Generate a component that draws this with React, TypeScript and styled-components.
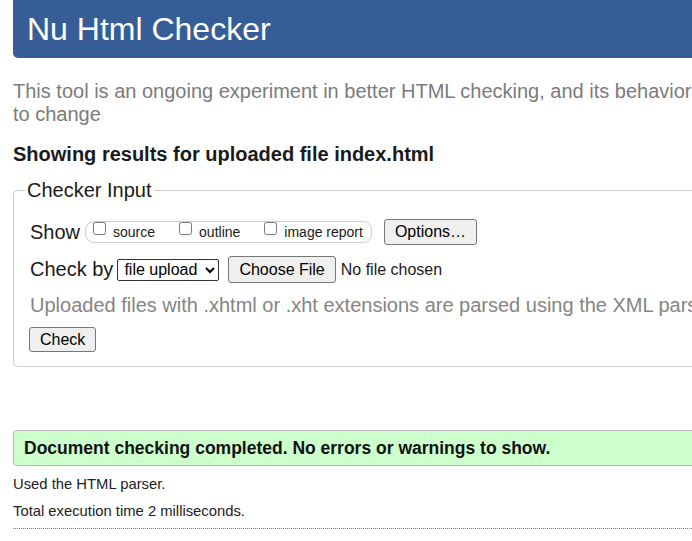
import React from "react";
import styled, { createGlobalStyle } from "styled-components";

const GlobalStyle = createGlobalStyle`
  html, body {
    margin: 0;
    padding: 0;
    background: #fff;
    overflow: hidden;
  }

  body {
    font-family: "Liberation Sans", Arial, sans-serif;
    color: #000;
  }
`;

const Page = styled.div`
  box-sizing: border-box;
  width: 1000px;
  padding-left: 13px;
`;

const Header = styled.header`
  display: flex;
  align-items: center;
  height: 58px;
  padding-left: 14px;
  background-color: #365d95;
  border-radius: 0 0 5px 5px;

  > h1 {
    margin: 0;
    font-size: 32px;
    font-weight: normal;
    line-height: 37px;
    color: #fff;
  }
`;

const Intro = styled.p`
  margin: 22px 0 0;
  font-size: 20px;
  line-height: 23px;
  color: #7b7b7b;
`;

const ResultsTitle = styled.h2`
  margin: 17px 0 0;
  font-size: 20px;
  font-weight: bold;
  line-height: 23px;
  color: #1a1a1a;
`;

const Fieldset = styled.fieldset`
  margin: 13px 0 0;
  padding: 17px 16px 14px;
  border: 1px solid #ccc;
  border-radius: 4px;

  > legend {
    margin-left: -5px;
    padding: 0 2px;
    font-size: 20px;
    line-height: 23px;
    color: #1a1a1a;
  }
`;

const FormBody = styled.div`
  display: flex;
  flex-direction: column;
  gap: 11px;
`;

const Row = styled.div<{ $h: number }>`
  display: flex;
  align-items: center;
  height: ${(p) => p.$h}px;
`;

const RowLabel = styled.span`
  margin-right: 5px;
  font-size: 20px;
  line-height: 23px;
  color: #1a1a1a;
`;

const OptionGroup = styled.div`
  display: flex;
  align-items: center;
  gap: 24px;
  height: 20px;
  padding: 0 8px 0 7px;
  border: 1px solid #ccc;
  border-radius: 9px;
`;

const Option = styled.label`
  display: flex;
  align-items: center;
  font-size: 14px;
  line-height: 16px;
  color: #1a1a1a;

  > input {
    width: 13px;
    height: 13px;
    margin: 0 7px 7px 0;
  }
`;

const Button = styled.button<{ $h: number; $ml?: number }>`
  box-sizing: border-box;
  display: inline-flex;
  align-items: center;
  justify-content: center;
  height: ${(p) => p.$h}px;
  margin-left: ${(p) => p.$ml ?? 0}px;
  padding: 0 10px;
  font-family: "Liberation Sans", Arial, sans-serif;
  font-size: 16px;
  color: #000;
  background-color: #efefef;
  border: 1px solid #767676;
  border-radius: 3px;
`;

const Select = styled.select`
  box-sizing: border-box;
  width: 102px;
  height: 22px;
  margin-left: -1px;
  padding: 0 0 0 2px;
  font-family: "Liberation Sans", Arial, sans-serif;
  font-size: 16px;
  color: #000;
  background-color: #fff;
  border: 1px solid #333;
  border-radius: 2px;
`;

const FileStatus = styled.span`
  margin-left: 5px;
  font-size: 16px;
  color: #1a1a1a;
`;

const Note = styled.div`
  font-size: 20px;
  line-height: 22px;
  color: #858585;
`;

const Success = styled.div`
  margin-top: 63px;
  padding: 8px 10px;
  font-size: 17.5px;
  font-weight: bold;
  line-height: 18px;
  color: #111;
  background-color: #ccffcc;
  border: 1px solid #bbb;
  border-radius: 4px;
`;

const Detail = styled.p`
  margin: 10px 0 0;
  font-size: 14.8px;
  line-height: 17px;
  color: #222;
`;

const Rule = styled.hr`
  margin: 8px 0 0;
  border: 0;
  border-top: 1px dotted #777;
`;

const App = () => {
  return (
    <Page>
      <GlobalStyle />
      <Header>
        <h1>Nu Html Checker</h1>
      </Header>
      <Intro>
        This tool is an ongoing experiment in better HTML checking, and its behavior remains subject
        <br />
        to change
      </Intro>
      <ResultsTitle>Showing results for uploaded file index.html</ResultsTitle>
      <Fieldset>
        <legend>Checker Input</legend>
        <FormBody>
          <Row $h={26}>
            <RowLabel>Show</RowLabel>
            <OptionGroup>
              <Option>
                <input type="checkbox" />
                source
              </Option>
              <Option>
                <input type="checkbox" />
                outline
              </Option>
              <Option>
                <input type="checkbox" />
                image report
              </Option>
            </OptionGroup>
            <Button $h={26} $ml={12}>Options…</Button>
          </Row>
          <Row $h={27}>
            <RowLabel>Check by</RowLabel>
            <Select defaultValue="file">
              <option value="address">address</option>
              <option value="file">file upload</option>
              <option value="text">text input</option>
            </Select>
            <Button $h={27} $ml={9}>Choose File</Button>
            <FileStatus>No file chosen</FileStatus>
          </Row>
          <Note>Uploaded files with .xhtml or .xht extensions are parsed using the XML parser.</Note>
          <Row $h={25}>
            <Button $h={25} $ml={-1}>Check</Button>
          </Row>
        </FormBody>
      </Fieldset>
      <Success>Document checking completed. No errors or warnings to show.</Success>
      <Detail>Used the HTML parser.</Detail>
      <Detail>Total execution time 2 milliseconds.</Detail>
      <Rule />
    </Page>
  );
};

export default App;
